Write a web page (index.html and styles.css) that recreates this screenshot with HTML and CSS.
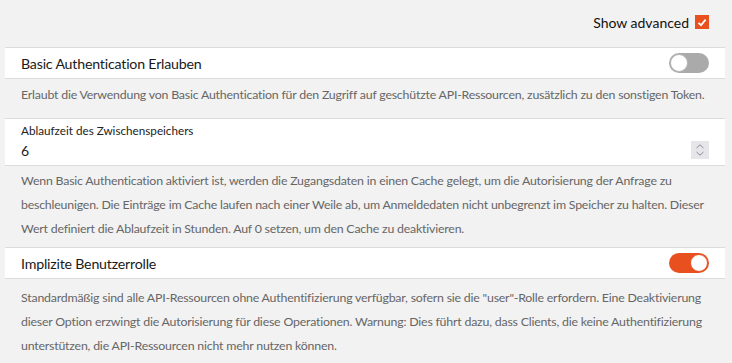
FILE: index.html
```html
<!DOCTYPE html>
<html lang="de">
<head>
  <meta charset="UTF-8">
  <meta name="viewport" content="width=device-width, initial-scale=1.0">
  <title>Authentifizierung</title>
  <link rel="stylesheet" href="styles.css">
</head>
<body>

  <!-- Toolbar -->
  <div class="toolbar">
    <label class="advanced">
      Show advanced
      <span class="check">
        <svg width="10" height="9" viewBox="0 0 10 9"><path d="M1.5 4.8 L4 7.2 L8.6 1.6" fill="none" stroke="#fff" stroke-width="1.8"/></svg>
      </span>
    </label>
  </div>

  <!-- Basic Auth -->
  <div class="setting first">
    <div class="card row">
      <span class="title">Basic Authentication Erlauben</span>
      <span class="toggle"></span>
    </div>
    <p class="desc">Erlaubt die Verwendung von Basic Authentication für den Zugriff auf geschützte API-Ressourcen, zusätzlich zu den sonstigen Token.</p>
  </div>

  <!-- Cache -->
  <div class="setting">
    <div class="card field">
      <div class="label">Ablaufzeit des Zwischenspeichers</div>
      <div class="value-row">
        <span class="value">6</span>
        <span class="spin">
          <svg width="10" height="14" viewBox="0 0 10 14"><path d="M1.5 5 L5 1.8 L8.5 5 M1.5 9 L5 12.2 L8.5 9" fill="none" stroke="#8a8a96" stroke-width="1"/></svg>
        </span>
      </div>
    </div>
    <p class="desc">Wenn Basic Authentication aktiviert ist, werden die Zugangsdaten in einen Cache gelegt, um die Autorisierung der Anfrage zu beschleunigen. Die Einträge im Cache laufen nach einer Weile ab, um Anmeldedaten nicht unbegrenzt im Speicher zu halten. Dieser Wert definiert die Ablaufzeit in Stunden. Auf 0 setzen, um den Cache zu deaktivieren.</p>
  </div>

  <!-- Implicit role -->
  <div class="setting last">
    <div class="card row">
      <span class="title">Implizite Benutzerrolle</span>
      <span class="toggle on"></span>
    </div>
    <p class="desc">Standardmäßig sind alle API-Ressourcen ohne Authentifizierung verfügbar, sofern sie die "user"-Rolle erfordern. Eine Deaktivierung dieser Option erzwingt die Autorisierung für diese Operationen. Warnung: Dies führt dazu, dass Clients, die keine Authentifizierung unterstützen, die API-Ressourcen nicht mehr nutzen können.</p>
  </div>

</body>
</html>
```

FILE: styles.css
```css
  * {
    box-sizing: border-box;
  }
  body, html {
    margin: 0;
    padding: 0;
    background-color: #f2f2f2;
    font-family: Lato, "Open Sans", sans-serif;
    color: #222;
    overflow: hidden;
  }
  body {
    padding: 0 7px 0 5px;
  }
  .toolbar {
    display: flex;
    justify-content: flex-end;
    height: 47px;
    padding-top: 13px;
  }
  .advanced {
    display: flex;
    align-items: center;
    gap: 6px;
    height: 18px;
    font-size: 14px;
    color: #111;
    padding-right: 16px;
  }
  .check {
    width: 14px;
    height: 14px;
    background: #e8501f;
    display: flex;
    align-items: center;
    justify-content: center;
  }
  .card {
    background: #fff;
    border-top: 1px solid #dcdcdc;
    border-bottom: 1px solid #dcdcdc;
    padding: 0 16px;
  }
  .row {
    display: flex;
    align-items: center;
    justify-content: space-between;
    height: 32px;
  }
  .title {
    font-size: 14.2px;
    letter-spacing: -0.2px;
    color: #1a1a1a;
  }
  .toggle {
    position: relative;
    width: 40px;
    height: 20px;
    border-radius: 10px;
    background: #aaaaaa;
  }
  .toggle::before {
    content: '';
    position: absolute;
    top: 1px;
    left: 1px;
    width: 18px;
    height: 18px;
    border-radius: 50%;
    background: #fff;
    box-sizing: border-box;
    border: 1px solid #b5b5b5;
  }
  .toggle.on {
    background: #e8501f;
  }
  .toggle.on::before {
    left: 21px;
    border-color: #e8501f;
  }
  .field {
    height: 48px;
    padding-top: 2px;
  }
  .label {
    font-size: 11.7px;
    color: #222;
    line-height: 18px;
  }
  .value-row {
    display: flex;
    align-items: center;
    justify-content: space-between;
    height: 22px;
  }
  .value {
    font-size: 14px;
  }
  .spin {
    width: 18px;
    height: 18px;
    background: #e6e6ea;
    display: flex;
    align-items: center;
    justify-content: center;
  }
  .desc {
    margin: 0;
    padding: 3px 10px 6px 16px;
    font-size: 12.35px;
    letter-spacing: -0.2px;
    line-height: 24px;
    color: #666;
  }
  .first .desc {
    padding-top: 4px;
    padding-bottom: 11px;
  }
  .last .desc {
    padding-top: 7px;
  }
```
